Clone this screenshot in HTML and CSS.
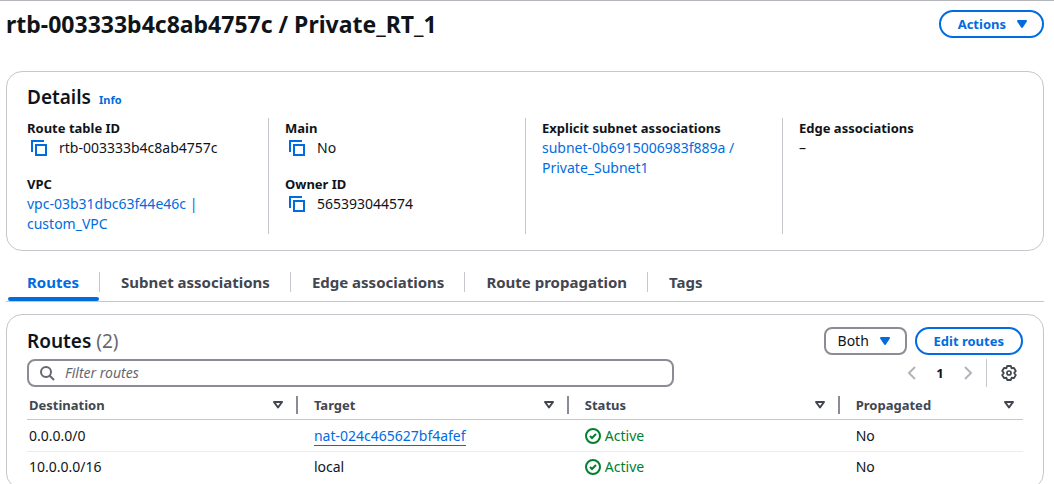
FILE: index.html
```html
<!DOCTYPE html>
<html lang="en">
<head>
<meta charset="utf-8">
<meta name="viewport" content="width=device-width, initial-scale=1">
<title>rtb-003333b4c8ab4757c / Private_RT_1</title>
<link rel="stylesheet" href="styles.css">
</head>
<body>
<svg class="sprite" aria-hidden="true">
  <symbol id="copy" viewBox="0 0 16 16"><path d="M1 12V1h12M5 5h10v10H5z" fill="none" stroke="currentColor" stroke-width="2"/></symbol>
  <symbol id="caret" viewBox="0 0 16 16"><path d="M4 5h8l-4 6z" fill="currentColor" stroke="currentColor" stroke-width="2" stroke-linejoin="round"/></symbol>
  <symbol id="sort" viewBox="0 0 16 16"><path d="M4 5h8l-4 5.500z" fill="none" stroke="currentColor" stroke-width="2" stroke-linejoin="round"/></symbol>
  <symbol id="search" viewBox="0 0 16 16"><circle cx="7" cy="7" r="5" fill="none" stroke="currentColor" stroke-width="2"/><path d="M10.500 10.500 15 15" stroke="currentColor" stroke-width="2"/></symbol>
  <symbol id="prev" viewBox="0 0 16 16"><path d="M11 2 5 8l6 6" fill="none" stroke="currentColor" stroke-width="2"/></symbol>
  <symbol id="next" viewBox="0 0 16 16"><path d="m5 2 6 6-6 6" fill="none" stroke="currentColor" stroke-width="2"/></symbol>
  <symbol id="gear" viewBox="0 0 16 16"><path d="M6.200 1h3.600l.8 2.300 2.350-.45 1.810 3.140L13.200 8l1.560 2.010-1.810 3.140-2.350-.45-.8 2.300H6.200l-.8-2.300-2.350.45-1.810-3.140L2.800 8 1.240 5.990l1.810-3.140 2.350.45z" fill="none" stroke="currentColor" stroke-width="1.900" stroke-linejoin="round"/><circle cx="8" cy="8" r="2" fill="none" stroke="currentColor" stroke-width="1.700"/></symbol>
  <symbol id="ok" viewBox="0 0 16 16"><circle cx="8" cy="8" r="7" fill="none" stroke="currentColor" stroke-width="2"/><path d="m5 8 2 2 4-4" fill="none" stroke="currentColor" stroke-width="2"/></symbol>
</svg>
<main class="page">
  <header class="page-header">
    <h1>rtb-003333b4c8ab4757c / Private_RT_1</h1>
    <button class="button menu" type="button">Actions <svg class="icon"><use href="#caret"/></svg></button>
  </header>

  <section class="card details">
    <div class="details-title"><h2>Details</h2><a class="info" href="#info">Info</a></div>
    <div class="columns">
      <dl class="column">
        <div><dt>Route table ID</dt><dd class="copyable"><button class="copy" type="button" aria-label="Copy route table ID"><svg class="icon"><use href="#copy"/></svg></button>rtb-003333b4c8ab4757c</dd></div>
        <div><dt>VPC</dt><dd><a href="#vpc">vpc-03b31dbc63f44e46c | custom_VPC</a></dd></div>
      </dl>
      <dl class="column">
        <div><dt>Main</dt><dd class="copyable"><button class="copy" type="button" aria-label="Copy main"><svg class="icon"><use href="#copy"/></svg></button>No</dd></div>
        <div><dt>Owner ID</dt><dd class="copyable"><button class="copy" type="button" aria-label="Copy owner ID"><svg class="icon"><use href="#copy"/></svg></button>565393044574</dd></div>
      </dl>
      <dl class="column">
        <div><dt>Explicit subnet associations</dt><dd><a href="#subnet">subnet-0b6915006983f889a / Private_Subnet1</a></dd></div>
      </dl>
      <dl class="column">
        <div><dt>Edge associations</dt><dd>–</dd></div>
      </dl>
    </div>
  </section>

  <nav class="tabs">
    <a class="tab active" href="#routes" aria-current="page">Routes</a>
    <a class="tab" href="#subnets">Subnet associations</a>
    <a class="tab" href="#edges">Edge associations</a>
    <a class="tab" href="#propagation">Route propagation</a>
    <a class="tab" href="#tags">Tags</a>
  </nav>

  <section class="card routes">
    <div class="routes-header">
      <h2>Routes <span class="count">(2)</span></h2>
      <div class="actions">
        <div class="select"><select aria-label="Route type"><option>Both</option></select><svg class="icon"><use href="#caret"/></svg></div>
        <button class="button" type="button">Edit routes</button>
      </div>
    </div>
    <div class="toolbar">
      <label class="search"><svg class="icon"><use href="#search"/></svg><input type="text" placeholder="Filter routes" aria-label="Filter routes"></label>
      <div class="pager">
        <button class="pager-arrow" type="button" aria-label="Previous page"><svg class="icon"><use href="#prev"/></svg></button>
        <button class="pager-page" type="button">1</button>
        <button class="pager-arrow" type="button" aria-label="Next page"><svg class="icon"><use href="#next"/></svg></button>
        <button class="settings" type="button" aria-label="Preferences"><svg class="icon"><use href="#gear"/></svg></button>
      </div>
    </div>
    <table>
      <thead>
        <tr>
          <th scope="col"><div class="head">Destination<svg class="icon"><use href="#sort"/></svg></div></th>
          <th scope="col"><div class="head">Target<svg class="icon"><use href="#sort"/></svg></div></th>
          <th scope="col"><div class="head">Status<svg class="icon"><use href="#sort"/></svg></div></th>
          <th scope="col"><div class="head">Propagated<svg class="icon"><use href="#sort"/></svg></div></th>
        </tr>
      </thead>
      <tbody>
        <tr><td>0.0.0.0/0</td><td><a class="target" href="#nat">nat-024c465627bf4afef</a></td><td><span class="status"><svg class="icon"><use href="#ok"/></svg>Active</span></td><td>No</td></tr>
        <tr><td>10.0.0.0/16</td><td>local</td><td><span class="status"><svg class="icon"><use href="#ok"/></svg>Active</span></td><td>No</td></tr>
      </tbody>
    </table>
  </section>
</main>
</body>
</html>
```
FILE: styles.css
```css
* { box-sizing: border-box; }

body {
  margin: 0;
  background: #fff;
  color: #0f141a;
  font: 14px/20px "Noto Sans", "Open Sans", sans-serif;
}

h1, h2, dl, dd { margin: 0; }
h1 { font-size: 23px; line-height: 30px; font-weight: 700; }
h2 { font-size: 19px; line-height: 24px; font-weight: 600; }
a { color: #006ce0; text-decoration: none; }
button, input, select { font: inherit; color: inherit; }
button { padding: 0; border: 0; background: none; cursor: pointer; }

.sprite { display: none; }
.icon { display: block; flex: none; width: 16px; height: 16px; }

.page {
  height: 100vh;
  overflow: auto;
  scrollbar-width: none;
  padding: 0 10px 0 6px;
  border-top: 1px solid #b4b4bb;
}

.page-header {
  display: flex;
  align-items: center;
  justify-content: space-between;
  padding: 8px 0 32px;
}

.button {
  display: flex;
  align-items: center;
  gap: 8px;
  height: 28px;
  padding: 0 17px;
  border: 2px solid #006ce0;
  border-radius: 14px;
  color: #006ce0;
  font-size: 13px;
  font-weight: 700;
}
.menu { padding-right: 12px; }

.card { border: 1px solid #c6c6cd; border-radius: 16px; }

.details { padding: 13px 20px 16px; }
.details-title { display: flex; align-items: baseline; gap: 8px; margin-bottom: 8px; }
.info { font-size: 11px; font-weight: 700; }

.columns { display: grid; grid-template-columns: repeat(4, 1fr); margin: 0 -16px; }
.column {
  display: flex;
  flex-direction: column;
  gap: 16px;
  padding: 0 16px;
  border-left: 1px solid #c6c6cd;
}
.column:first-child { border-left: 0; }
dt { font-size: 13px; font-weight: 700; }
.copyable { display: flex; align-items: center; }
.copy { width: 32px; padding-left: 4px; color: #006ce0; }

.tabs {
  display: flex;
  margin: 15px 0 12px;
  border-bottom: 1px solid #c6c6cd;
}
.tab {
  display: flex;
  position: relative;
  padding: 6px 0 9px 21px;
  color: #424650;
  font-size: 15px;
  font-weight: 700;
}
.tab::after {
  content: "";
  margin-left: 20px;
  border-right: 1px solid #c6c6cd;
}
.tab:last-child::after { display: none; }
.active { color: #006ce0; }
.active::before {
  content: "";
  position: absolute;
  left: 2px;
  right: 1px;
  bottom: 0;
  height: 4px;
  border-radius: 2px;
  background: #006ce0;
}

.routes { padding: 12px 20px 6px; }
.routes-header { display: flex; align-items: center; justify-content: space-between; }
.count { color: #656871; font-weight: 400; }
.actions { display: flex; gap: 8px; }

.select { display: grid; align-items: center; width: 83px; }
.select > * { grid-area: 1 / 1; }
.select select {
  appearance: none;
  width: 100%;
  height: 28px;
  padding: 0 12px;
  border: 2px solid #8c8c94;
  border-radius: 8px;
  background: #fff;
}
.select .icon { justify-self: end; margin-right: 14px; color: #006ce0; pointer-events: none; }

.toolbar {
  display: flex;
  align-items: center;
  justify-content: space-between;
  margin: 4px 0;
}
.search {
  display: flex;
  align-items: center;
  gap: 10px;
  width: 65%;
  height: 28px;
  padding: 0 10px;
  border: 2px solid #8c8c94;
  border-radius: 8px;
  color: #656871;
}
.search input { flex: 1; min-width: 0; padding: 0; border: 0; outline: 0; background: none; }
.search input::placeholder { color: #656871; opacity: 1; font-style: italic; }

.pager { display: flex; align-items: center; }
.pager-arrow { color: #b4b4bb; }
.pager-page { width: 40px; font-size: 13px; font-weight: 700; }
.settings {
  margin-left: 10px;
  padding: 6px 6px 6px 14px;
  border-left: 1px solid #c6c6cd;
  color: #424650;
}

table { width: 100%; border-collapse: separate; border-spacing: 0; table-layout: fixed; }
th, td { text-align: left; padding: 0 0 0 16px; }
th {
  height: 29px;
  width: 27.2%;
  border-bottom: 1px solid #c6c6cd;
  color: #424650;
  font-size: 13px;
  font-weight: 700;
}
th:first-child, td:first-child { padding-left: 2px; }
th:last-child { width: auto; }
.head {
  display: flex;
  align-items: center;
  justify-content: space-between;
  height: 18px;
  padding-right: 10px;
  border-right: 2px solid #8c8c94;
}
th:last-child .head { padding-right: 6px; border-right: 0; }
td { height: 30px; }
tbody tr:first-child td { height: 32px; border-bottom: 1px solid #ebebf0; }
.target { border-bottom: 1px solid #006ce0; }
.status { display: flex; align-items: center; gap: 4px; color: #00802f; }
```
